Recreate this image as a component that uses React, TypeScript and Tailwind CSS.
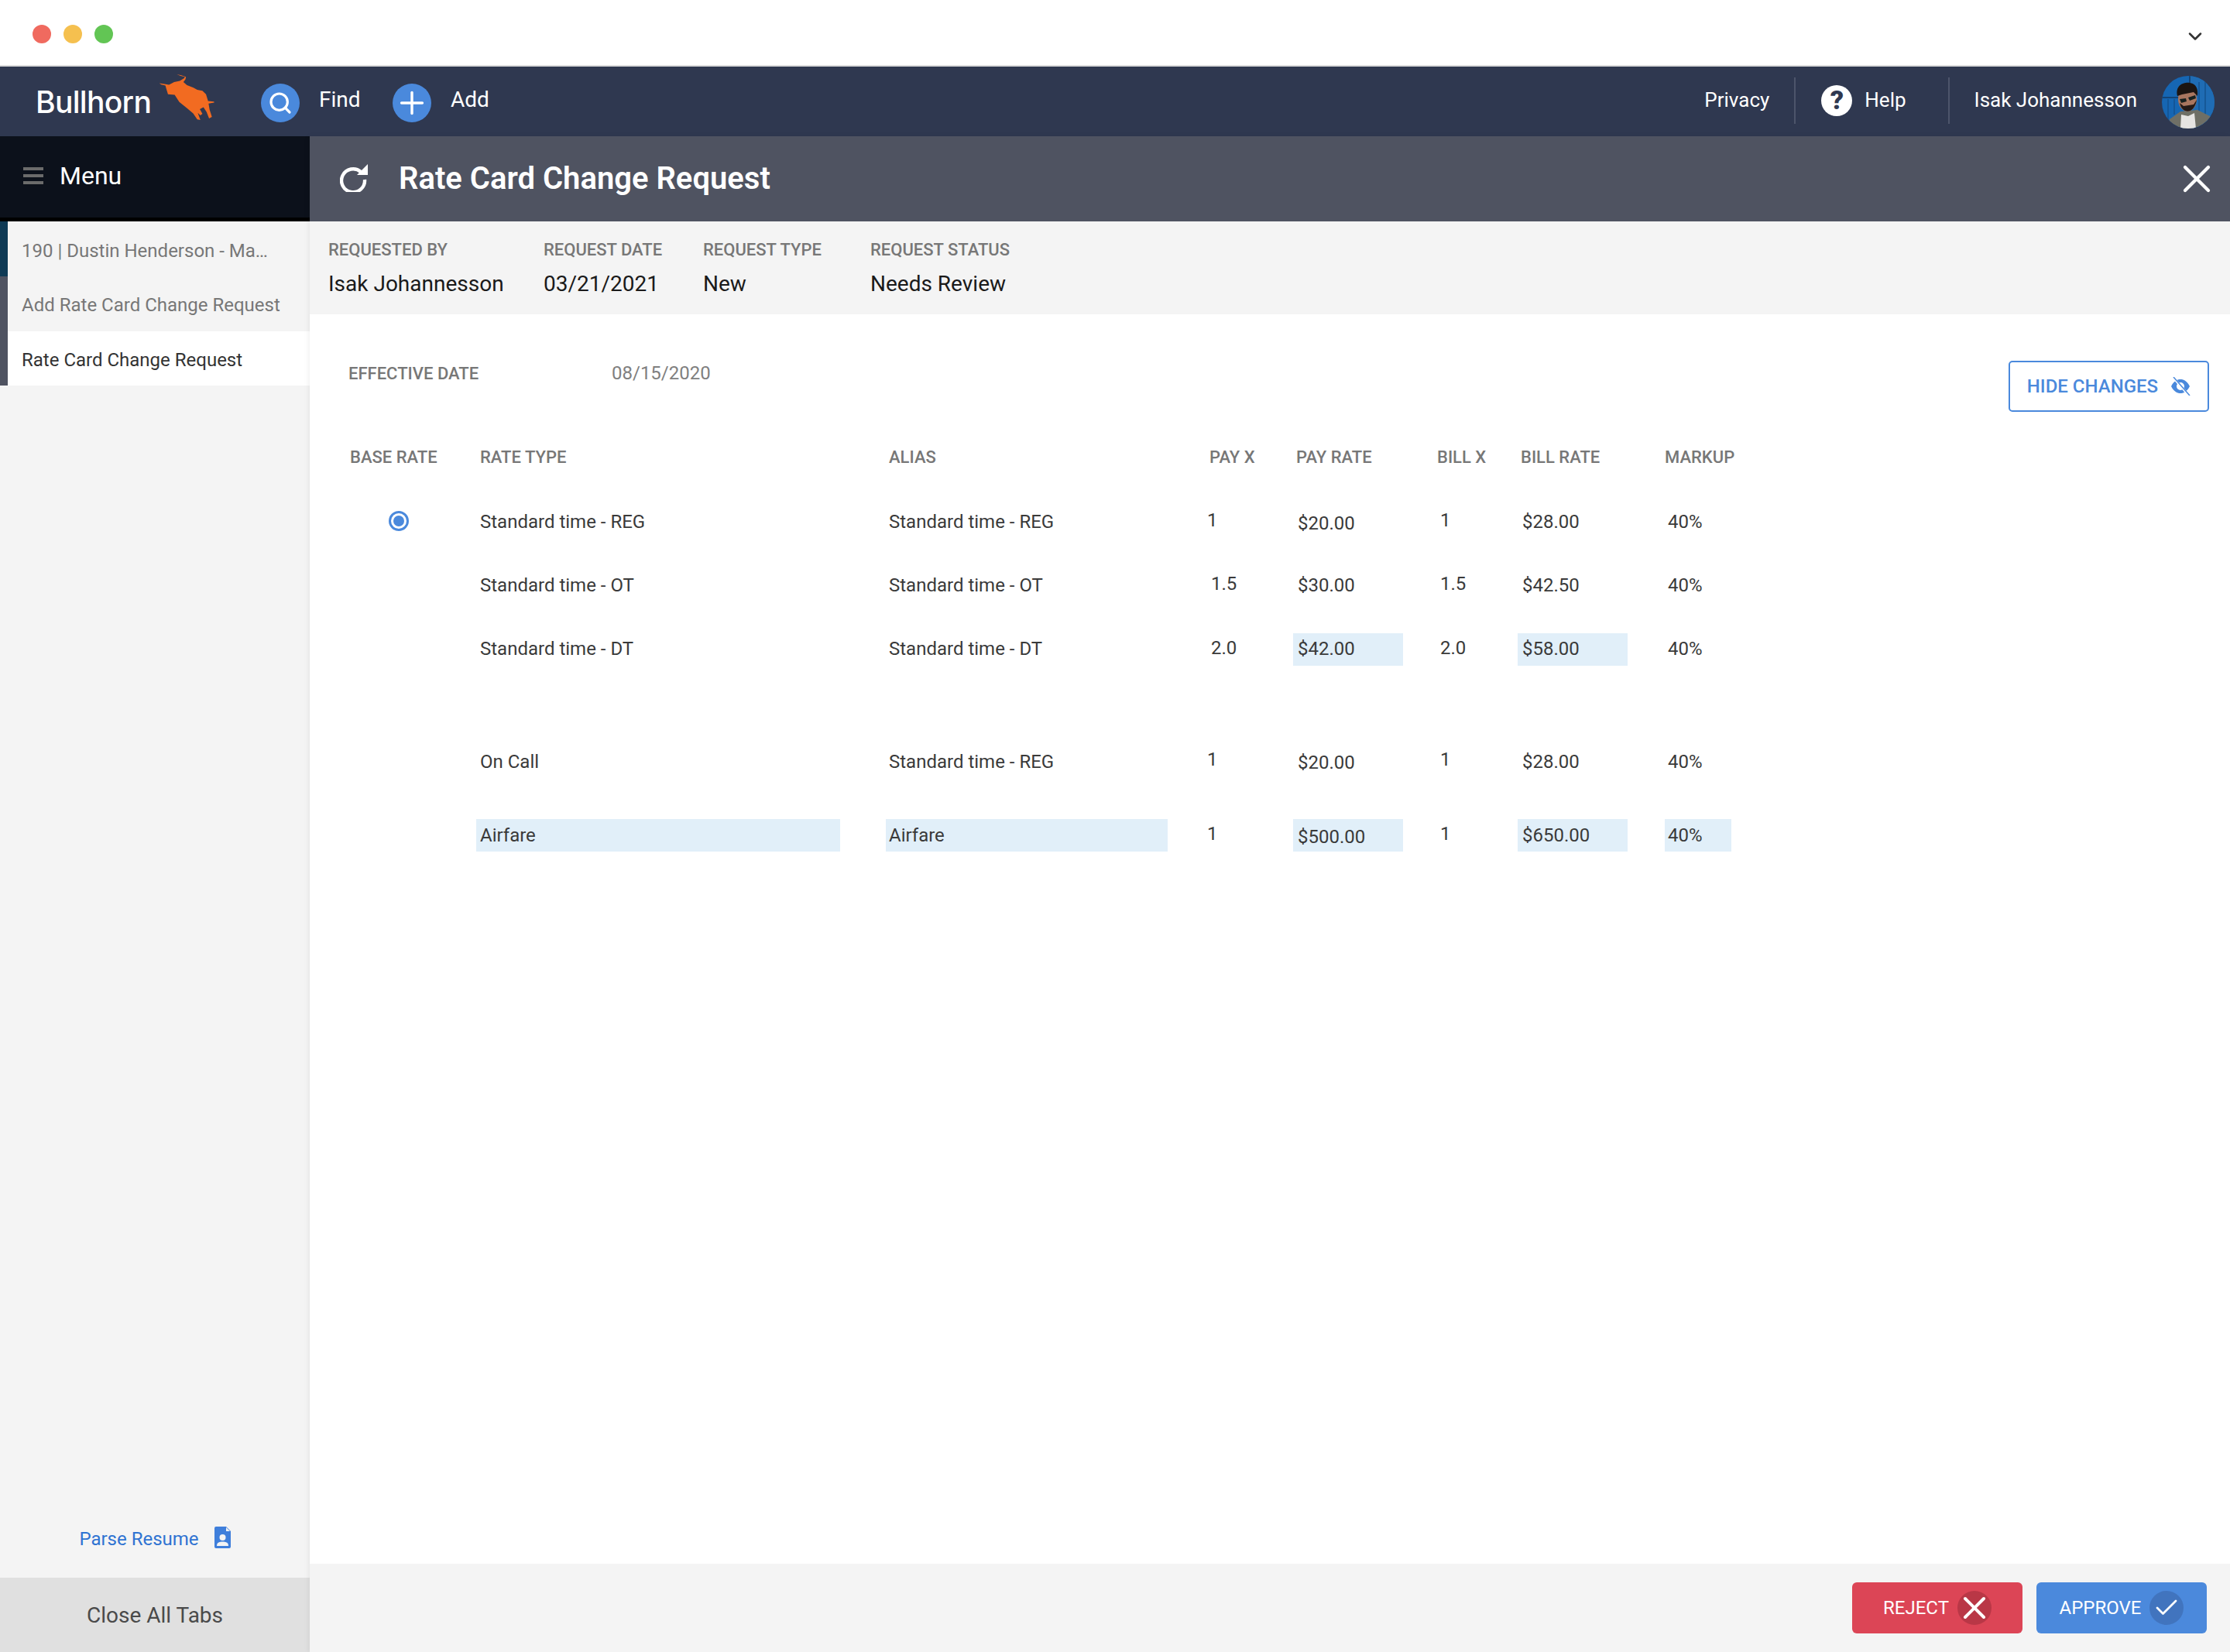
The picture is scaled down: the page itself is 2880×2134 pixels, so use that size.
import { Check, ChevronDown, Plus, Search, X } from "lucide-react";

const Bull = () => (
  <svg viewBox="530 60 220 185" className="w-[73px] h-[62px] ml-[4px] mt-[-10px]">
    <path fill="#f26b21" d="M532 97 L552 100 L570 103 L590 92 L612 88 L628 78 L632 72 L615 68 L600 62 L618 66 L636 72 L634 82 L626 92 L640 104 L665 114 L680 122 L700 126 L714 140 L722 166 L745 168 L746 172 L724 176 L728 200 L737 228 L726 234 L716 208 L704 190 L690 198 L700 216 L692 222 L682 212 L692 240 L680 238 L664 214 L640 194 L610 170 L592 142 L566 140 L560 120 L556 106 L540 102 Z" />
  </svg>
);

const Avatar = () => (
  <svg viewBox="0 0 68 68" className="w-[68px] h-[68px] rounded-full">
    <rect width="68" height="68" fill="#1666b3" />
    <rect x="36" width="32" height="68" fill="#1f6cb4" />
    <path d="M0 28H30M36 0V12" stroke="#123a66" strokeWidth="1.5" />
    <path d="M48 8V50M56 8V50M8 30V56M16 30V50" stroke="#14528f" strokeWidth="1.5" />
    <path d="M8 68 L10 56 L24 46 L46 44 L62 52 L68 68 Z" fill="#6f6f66" />
    <path d="M25 50 L34 52 L42 48 L44 68 L24 68 Z" fill="#e6e4e2" />
    <ellipse cx="33" cy="30" rx="12" ry="16" fill="#a9765f" />
    <path d="M20 26 C17 12 28 8 36 9 C45 10 47 18 46 26 L41 21 L26 24 Z" fill="#1c1512" />
    <path d="M23 35 C26 50 42 50 45 31 L41 37 L28 39 Z" fill="#241a17" />
    <path d="M23 30 L31 29 L32 33 L25 35 Z M34 28 L43 25 L44 29 L36 32 Z" fill="#17211f" />
  </svg>
);

const RefreshIcon = () => (
  <svg viewBox="0 0 36 36" className="w-[36px] h-[36px] mt-[-3px]" fill="none">
    <path d="M27 10 A15 15 0 1 0 32 20" stroke="#ffffff" strokeWidth="4.4" />
    <path d="M36 0 V14 H22 Z" fill="#ffffff" />
  </svg>
);

const EyeOff = () => (
  <svg viewBox="0 0 26 24" className="w-[26px] h-[24px]" fill="none">
    <path fillRule="evenodd" fill="#4a89dc" d="M1 12 C5 4 10 3 13 3 C16 3 21 4 25 12 C21 20 16 21 13 21 C10 21 5 20 1 12 Z M13 7 A5 5 0 1 0 13 17 A5 5 0 1 0 13 7 Z" />
    <path d="M4 1 L24 24" stroke="#ffffff" strokeWidth="3" />
    <path d="M4 0 L25 24" stroke="#4a89dc" strokeWidth="1.5" />
  </svg>
);

const ResumeIcon = () => (
  <svg viewBox="0 0 21 28" className="w-[21px] h-[28px]">
    <path fill="#3f7fdb" d="M2 0 H15 L21 6 V26 a2 2 0 0 1 -2 2 H2 a2 2 0 0 1 -2 -2 V2 a2 2 0 0 1 2 -2 Z" />
    <path fill="#f4f4f4" d="M15 1 L20 6 H15 Z" />
    <circle cx="10.5" cy="14" r="4" fill="#f4f4f4" />
    <path fill="#f4f4f4" d="M3 25 C3 20 7 19.5 10.5 19.5 C14 19.5 18 20 18 25 Z" />
  </svg>
);

const infoItems = [
  { label: "REQUESTED BY", value: "Isak Johannesson", cls: "w-[278px]" },
  { label: "REQUEST DATE", value: "03/21/2021", cls: "w-[206px]" },
  { label: "REQUEST TYPE", value: "New", cls: "w-[216px]" },
  { label: "REQUEST STATUS", value: "Needs Review", cls: "w-[300px]" },
];

const cols = "grid grid-cols-[163px_529px_417px_109px_185px_105px_190px_86px] h-[42px] items-center text-[24px] text-[#3a3a3a]";

const Cell = ({ text, hl, cls }: { text: string; hl?: string; cls?: string }) => (
  <div className={`h-[42px] flex items-center ${hl ? `${hl} bg-[#e1eff9]` : ""} ${cls ?? ""}`}>{text}</div>
);

const Rates = [
  { top: "mt-[42px]", type: "Standard time - REG", alias: "Standard time - REG", payx: "1", pay: "$20.00", billx: "1", bill: "$28.00", radio: true, payY: "pt-[4px]", rowY: "" },
  { top: "mt-[40px]", type: "Standard time - OT", alias: "Standard time - OT", payx: "1.5", pay: "$30.00", billx: "1.5", bill: "$42.50", payY: "", rowY: "" },
  { top: "mt-[41px]", type: "Standard time - DT", alias: "Standard time - DT", payx: "2.0", pay: "$42.00", billx: "2.0", bill: "$58.00", hlPay: true, payY: "pb-[2px]", rowY: "pb-[2px]" },
  { top: "mt-[102px]", type: "On Call", alias: "Standard time - REG", payx: "1", pay: "$20.00", billx: "1", bill: "$28.00", payY: "pt-[4px]", rowY: "pt-[1px]" },
  { top: "mt-[54px]", type: "Airfare", alias: "Airfare", payx: "1", pay: "$500.00", billx: "1", bill: "$650.00", hlAll: true, hlPay: true, payY: "pt-[3px]", rowY: "" },
];

export default function App() {
  return (
    <div className="w-[2880px] h-[2134px] flex flex-col bg-white font-['Roboto',sans-serif] overflow-hidden">
      {/* window bar */}
      <div className="h-[86px] shrink-0 bg-white border-b-[2px] border-[#dddddd] flex items-center pl-[42px] pr-[31px] pt-[4px]">
        <div className="w-[24px] h-[24px] rounded-full bg-[#f06a5f]" />
        <div className="w-[24px] h-[24px] rounded-full bg-[#f5c04f] ml-[16px]" />
        <div className="w-[24px] h-[24px] rounded-full bg-[#62c554] ml-[16px]" />
        <ChevronDown className="ml-auto w-[28px] h-[28px] text-[#333333] mt-[6px]" strokeWidth={2.2} />
      </div>

      {/* nav */}
      <div className="h-[90px] shrink-0 bg-[#2f3850] flex items-center text-white pl-[46px] pr-[20px]">
        <span className="w-[155px] text-[39px] font-medium font-['Inter',sans-serif] tracking-[-0.7px] mt-[2px]">Bullhorn</span>
        <Bull />
        <div className="w-[50px] h-[50px] rounded-full bg-[#4a89dc] flex items-center justify-center ml-[59px] mt-[4px]">
          <Search className="w-[32px] h-[32px]" strokeWidth={2.4} />
        </div>
        <span className="text-[28px] ml-[25px] mt-[-4px] w-[53px]">Find</span>
        <div className="w-[50px] h-[50px] rounded-full bg-[#4a89dc] flex items-center justify-center ml-[42px] mt-[4px]">
          <Plus className="w-[46px] h-[46px]" strokeWidth={1.8} />
        </div>
        <span className="text-[28px] ml-[25px] mt-[-4px]">Add</span>

        <span className="ml-auto text-[26px] mt-[-4px]">Privacy</span>
        <div className="w-[2px] h-[60px] bg-[#4d556b] ml-[32px] mt-[-2px]" />
        <div className="w-[40px] h-[40px] rounded-full bg-white text-[#2f3850] flex items-center justify-center text-[34px] font-black ml-[33px] mt-[-3px]">?</div>
        <span className="text-[26px] ml-[16px] mt-[-4px]">Help</span>
        <div className="w-[2px] h-[60px] bg-[#4d556b] ml-[54px] mt-[-2px]" />
        <span className="text-[26px] ml-[32px] mt-[-4px]">Isak Johannesson</span>
        <div className="ml-[32px] mt-[2px]"><Avatar /></div>
      </div>

      <div className="flex-1 flex min-h-0">
        {/* sidebar */}
        <div className="w-[400px] shrink-0 bg-[#f4f4f4] flex flex-col">
          <div className="h-[110px] bg-[#0c111b] border-b-[5px] border-black flex items-center pl-[30px] pb-[3px] text-white">
            <div className="w-[26px] flex flex-col gap-[5px]">
              <div className="h-[4px] bg-[#6b6b6b]" />
              <div className="h-[4px] bg-[#6b6b6b]" />
              <div className="h-[4px] bg-[#6b6b6b]" />
            </div>
            <span className="text-[32px] ml-[21px]">Menu</span>
          </div>
          <div className="h-[71px] border-l-[10px] border-[#0f3a55] flex items-center pl-[18px] pt-[5px] text-[24px] text-[#777777]">190 | Dustin Henderson - Ma…</div>
          <div className="h-[71px] border-l-[10px] border-[#4f5361] flex items-center pl-[18px] pt-[3px] text-[24px] text-[#777777]">Add Rate Card Change Request</div>
          <div className="h-[70px] border-l-[10px] border-[#4f5361] bg-white flex items-center pl-[18px] pt-[3px] text-[24px] text-[#333333]">Rate Card Change Request</div>
          <div className="mt-auto h-[116px] flex items-center justify-center pt-[16px]">
            <span className="text-[24px] text-[#2f73d2]">Parse Resume</span>
            <span className="ml-[20px] mt-[-4px]"><ResumeIcon /></span>
          </div>
          <div className="h-[96px] bg-[#e0e0e0] flex items-center justify-center pt-[2px] text-[28px] text-[#4a4a4a]">Close All Tabs</div>
        </div>

        {/* main */}
        <div className="flex-1 flex flex-col min-w-0 shadow-[-2px_0_6px_rgba(0,0,0,0.06)]">
          <div className="h-[110px] shrink-0 bg-[#4f5361] flex items-center text-white pl-[39px] pr-[13px]">
            <RefreshIcon />
            <span className="text-[40px] font-semibold ml-[40px]">Rate Card Change Request</span>
            <X className="ml-auto w-[60px] h-[60px]" strokeWidth={1.7} />
          </div>

          <div className="h-[120px] shrink-0 bg-[#f4f4f4] flex pl-[24px] pt-[24px]">
            {infoItems.map((it) => (
              <div key={it.label} className={it.cls}>
                <div className="text-[22px] font-medium text-[#777777] leading-[26px]">{it.label}</div>
                <div className="text-[28px] text-[#1a1a1a] leading-[34px] mt-[14px]">{it.value}</div>
              </div>
            ))}
          </div>

          <div className="flex-1 min-h-0 relative pl-[52px] pr-[27px]">
            <div className="flex items-start">
              <div className="flex items-center mt-[62px] ml-[-2px] h-[28px]">
                <span className="text-[22px] font-medium text-[#777777] w-[340px]">EFFECTIVE DATE</span>
                <span className="text-[24px] text-[#808080]">08/15/2020</span>
              </div>
              <button className="ml-auto mt-[60px] w-[259px] h-[66px] rounded-[5px] border-[2px] border-[#4a89dc] flex items-center justify-center gap-[16px] text-[24px] font-medium text-[#4a89dc] bg-white">
                HIDE CHANGES
                <EyeOff />
              </button>
            </div>

            <div className={`${cols} mt-[37px] !text-[22px] font-medium !text-[#777777]`}>
              <div>BASE RATE</div>
              <div className="pl-[5px]">RATE TYPE</div>
              <div className="pl-[4px]">ALIAS</div>
              <div className="pl-[1px]">PAY X</div>
              <div className="pl-[4px]">PAY RATE</div>
              <div className="pl-[1px]">BILL X</div>
              <div className="pl-[4px]">BILL RATE</div>
              <div>MARKUP</div>
            </div>

            {Rates.map((r) => (
              <div key={r.type + r.payx} className={`${cols} ${r.top}`}>
                <div className="pl-[50px] pb-[2px]">
                  {r.radio && (
                    <div className="w-[26px] h-[26px] rounded-full border-[3px] border-[#4a89dc] flex items-center justify-center">
                      <div className="w-[14px] h-[14px] rounded-full bg-[#4a89dc]" />
                    </div>
                  )}
                </div>
                <Cell text={r.type} cls={`pl-[5px] ${r.rowY}`} hl={r.hlAll ? "w-[470px]" : ""} />
                <Cell text={r.alias} cls={`pl-[4px] ${r.rowY}`} hl={r.hlAll ? "w-[364px]" : ""} />
                <Cell text={r.payx} cls={r.payx === "1" ? "pb-[4px] ml-[-2px]" : "pb-[4px] pl-[3px]"} />
                <Cell text={r.pay} cls={`pl-[6px] ${r.payY}`} hl={r.hlPay ? "w-[142px]" : ""} />
                <Cell text={r.billx} cls={r.billx === "1" ? "pb-[4px] pl-[5px]" : "pb-[4px] pl-[5px]"} />
                <Cell text={r.bill} cls={`pl-[6px] ${r.rowY}`} hl={r.hlPay ? "w-[142px]" : ""} />
                <Cell text="40%" cls={`pl-[4px] ${r.rowY}`} hl={r.hlAll ? "w-[86px]" : ""} />
              </div>
            ))}
          </div>

          <div className="h-[114px] shrink-0 bg-[#f4f4f4] flex items-start justify-end gap-[18px] pt-[24px] pr-[30px]">
            <button className="w-[220px] h-[66px] rounded-[6px] bg-[#dc4556] flex items-center justify-center gap-[11px] text-[24px] text-white">
              REJECT
              <span className="w-[44px] h-[44px] rounded-full bg-[#b93746] flex items-center justify-center"><X className="w-[48px] h-[48px] shrink-0" strokeWidth={2} /></span>
            </button>
            <button className="w-[220px] h-[66px] rounded-[6px] bg-[#4b89dc] flex items-center justify-center gap-[11px] text-[24px] text-white">
              APPROVE
              <span className="w-[44px] h-[44px] rounded-full bg-[#4174be] flex items-center justify-center"><Check className="w-[36px] h-[36px] shrink-0" strokeWidth={1.8} /></span>
            </button>
          </div>
        </div>
      </div>
    </div>
  );
}
